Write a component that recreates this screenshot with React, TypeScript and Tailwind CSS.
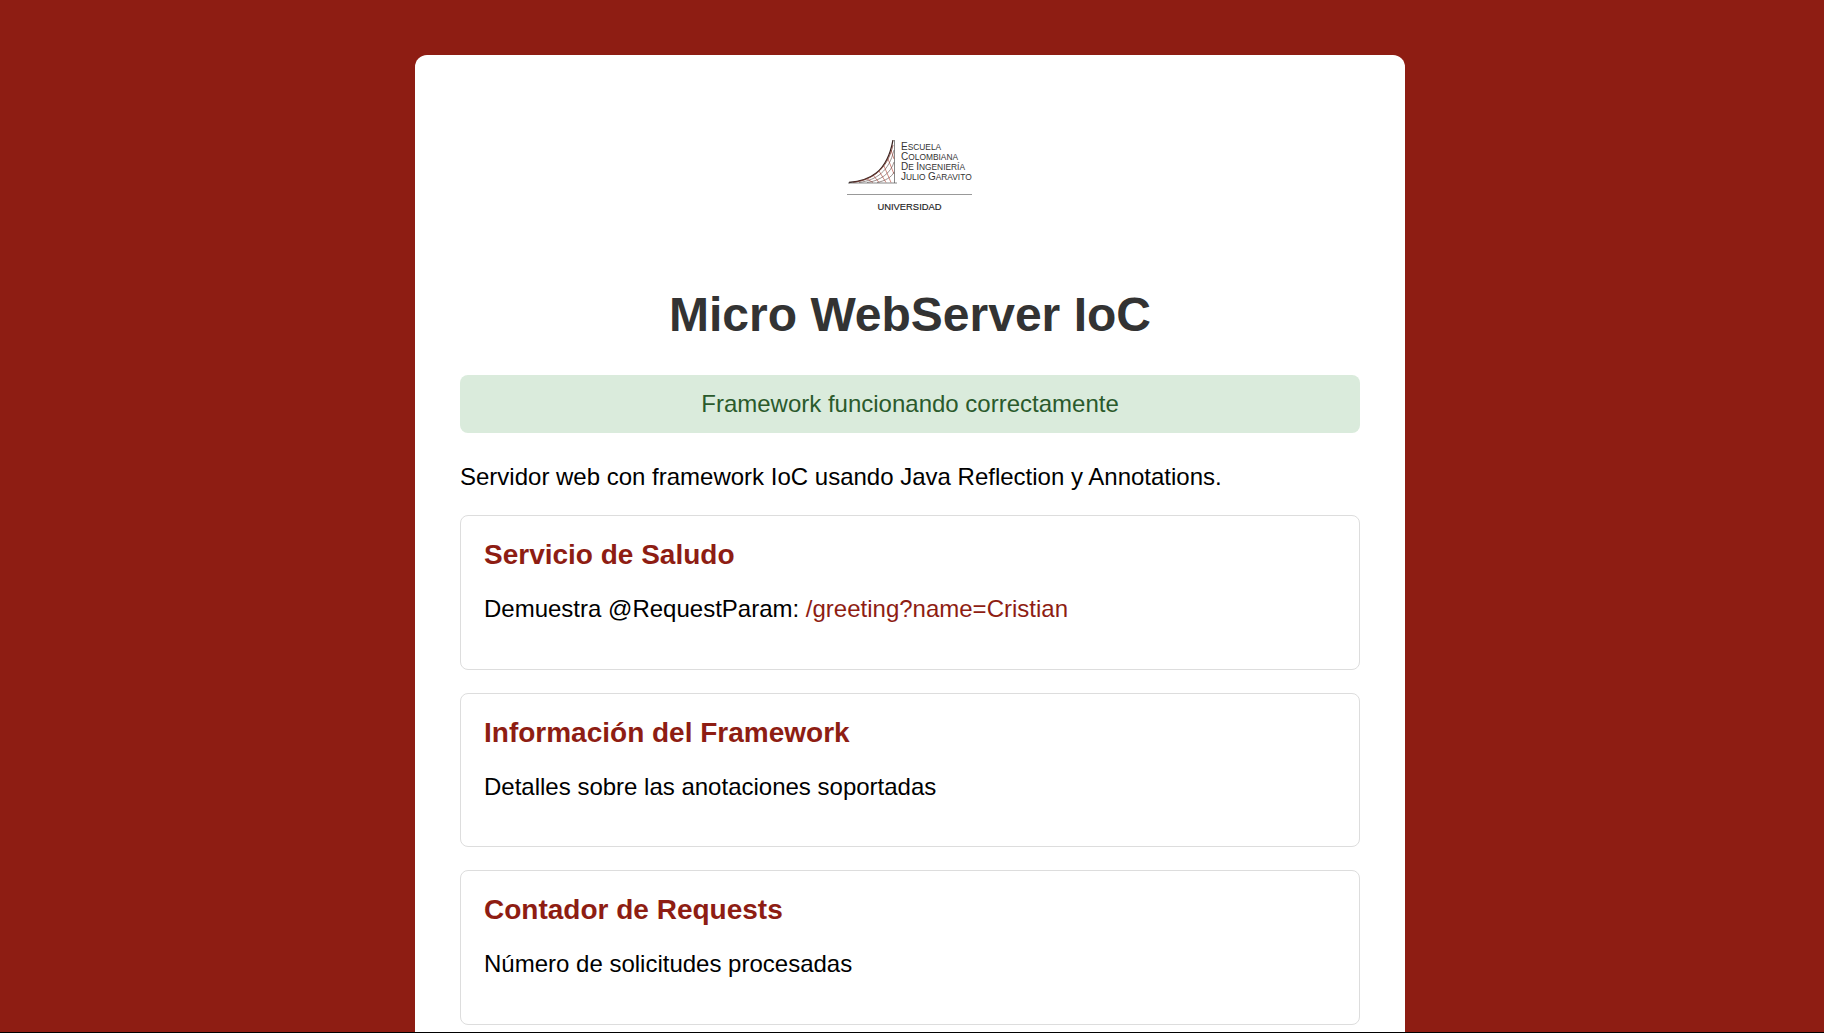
const cards = [
  {
    title: 'Servicio de Saludo',
    body: 'Demuestra @RequestParam: ',
    link: '/greeting?name=Cristian',
  },
  { title: 'Información del Framework', body: 'Detalles sobre las anotaciones soportadas' },
  { title: 'Contador de Requests', body: 'Número de solicitudes procesadas' },
]

const logoLines = [
  ['E', 'SCUELA'],
  ['C', 'OLOMBIANA'],
  ['D', 'E ', 'I', 'NGENIERÍA'],
  ['J', 'ULIO ', 'G', 'ARAVITO'],
]

function Logo() {
  return (
    <svg width="126" height="80" viewBox="0 0 126 80" className="block">
      {/* lattice under the curve */}
      <path
        d="M20 44 L26 47.5 M26 40 L32 47.5 M32 36 L39 47.5 M37 31 L44 47.5 M41 24 L47 39 M44 15 L47 24"
        fill="none"
        stroke="#c0584a"
        strokeWidth="0.7"
      />
      <path
        d="M12 47.5 C30 45 42 36 47 15 M20 47.5 C33 46 44 38 47 27 M30 47.5 C38 46 45 42 47 37"
        fill="none"
        stroke="#5c4a46"
        strokeWidth="0.6"
      />
      <path d="M2 47.5 C22 46 40 38 46 5" fill="none" stroke="#3a2421" strokeWidth="1.3" />
      <path d="M6 47.5 C24 45 40 36 46 10" fill="none" stroke="#7a3d35" strokeWidth="0.8" />
      <path d="M47.5 5 V48" stroke="#555" strokeWidth="0.7" />
      <path d="M1 48 H50" stroke="#555" strokeWidth="0.7" />
      <g fontFamily="'Liberation Sans', Arial, sans-serif" fill="#333">
        {logoLines.map((parts, i) => (
          <text key={i} x="54" y={15 + i * 10}>
            {parts.map((p, j) => (
              <tspan key={j} fontSize={j % 2 === 0 ? 10 : 8.4}>
                {p}
              </tspan>
            ))}
          </text>
        ))}
      </g>
      <path d="M0 59.5 H125" stroke="#999" strokeWidth="1" />
      <text x="62.5" y="75" textAnchor="middle" fontFamily="'Liberation Sans', Arial, sans-serif" fontSize="9.4" fill="#222" stroke="#222" strokeWidth="0.15">
        UNIVERSIDAD
      </text>
    </svg>
  )
}

export default function App() {
  return (
    <div className="h-screen overflow-hidden bg-black font-['Liberation_Sans',Arial,sans-serif] text-[24px] text-black">
      <div className="h-[1032px] overflow-hidden bg-[#8e1d13] pt-[55px] pr-[4px]">
        <main className="mx-auto w-[990px] rounded-t-[12px] bg-white px-[45px] pt-[80px] pb-10">
          <div className="flex justify-center">
            <Logo />
          </div>
          <h1 className="mt-[72px] text-center text-[48px] leading-[56px] font-bold text-[#333]">Micro WebServer IoC</h1>
          <div className="mt-[32px] rounded-[8px] bg-[#daebdc] py-[14px] text-center leading-[30px] text-[#2a5a2c]">
            Framework funcionando correctamente
          </div>
          <p className="mt-[29px] leading-[29px]">Servidor web con framework IoC usando Java Reflection y Annotations.</p>
          <div className="mt-[24px] flex flex-col gap-[23px]">
            {cards.map((c) => (
              <section key={c.title} className="h-[154.5px] rounded-[8px] border border-[#ddd] px-[23px] pt-[23px]">
                <h2 className="text-[28px] leading-[32px] font-bold text-[#8e1d13]">{c.title}</h2>
                <p className="mt-[23px] leading-[29px]">
                  {c.body}
                  {c.link && <a className="text-[#8e1d13]">{c.link}</a>}
                </p>
              </section>
            ))}
          </div>
        </main>
      </div>
    </div>
  )
}
